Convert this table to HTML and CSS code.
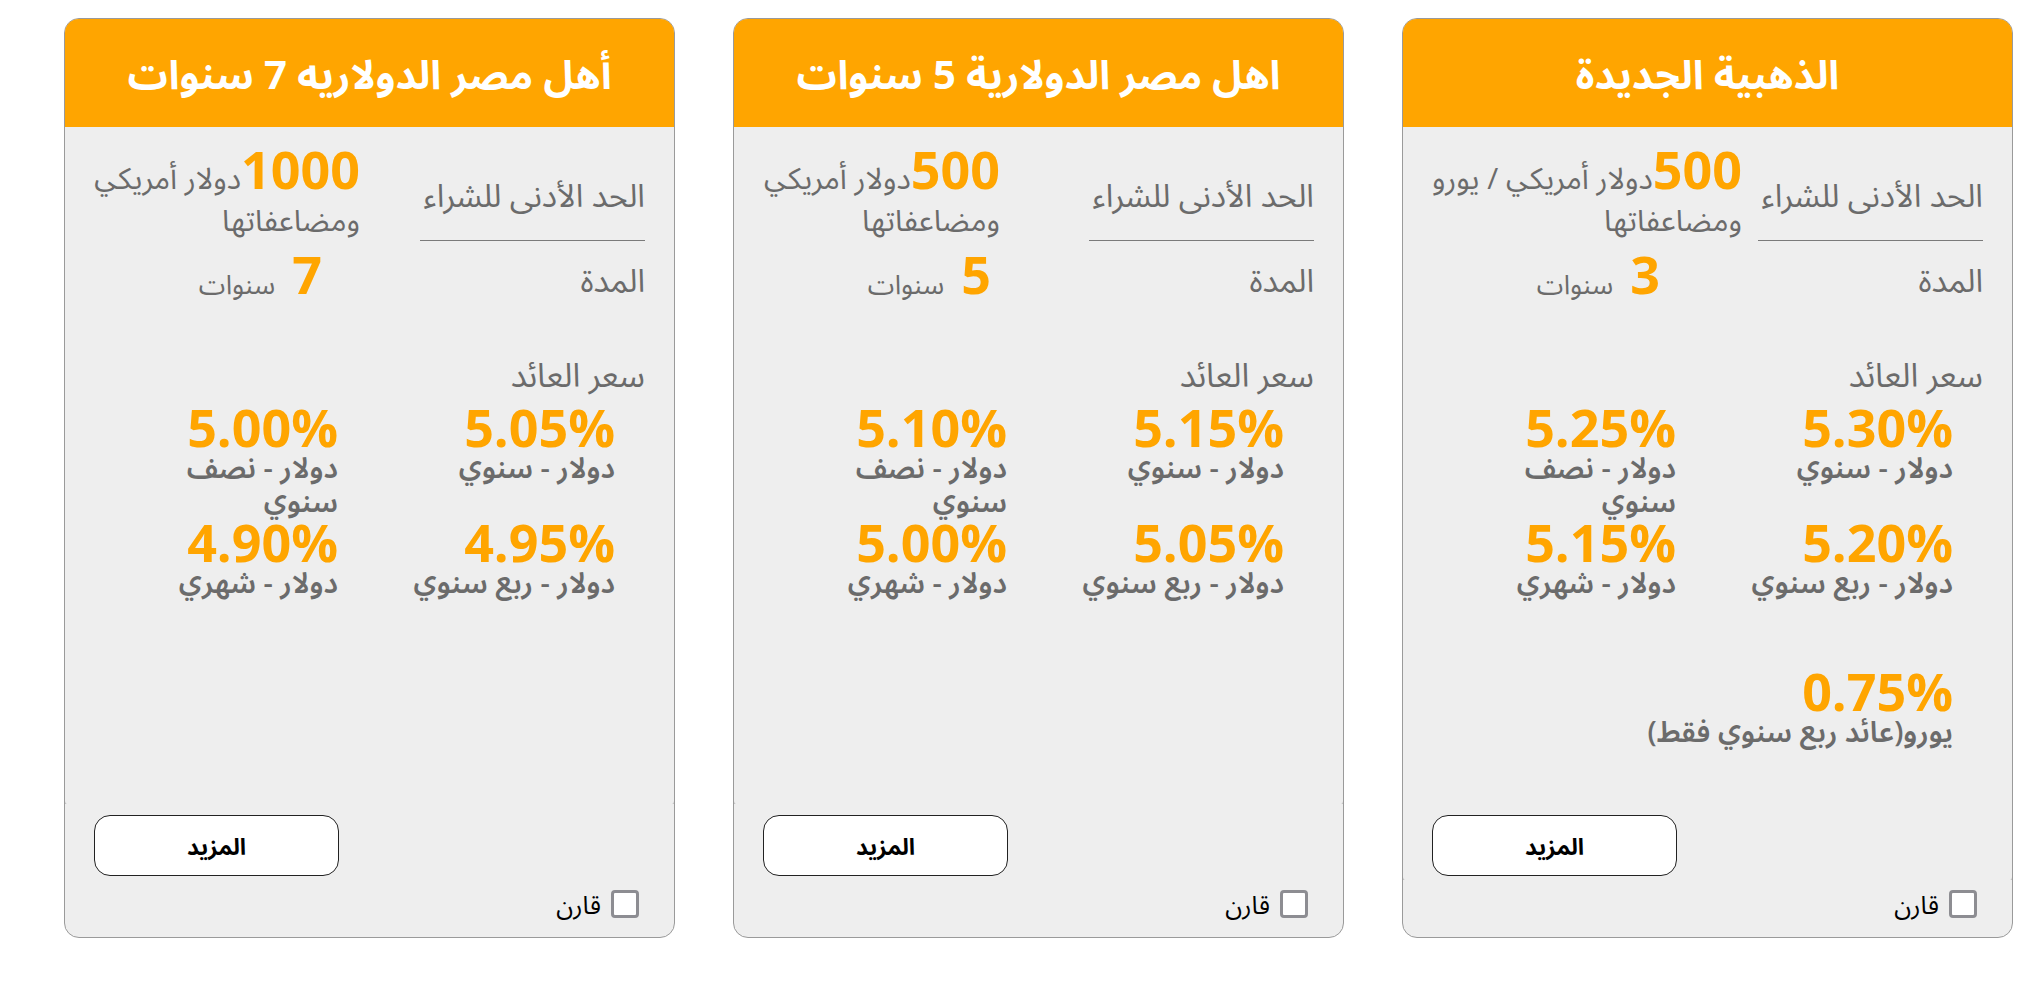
FILE: index.html
```html
<!DOCTYPE html>
<html lang="ar" dir="rtl">
<head>
<meta charset="utf-8">
<title>شهادات</title>
<link rel="stylesheet" href="styles.css">
</head>
<body>
<div class="page">
  <div class="card">
    <div class="card-head"><h2 class="card-title">الذهبية الجديدة</h2></div>
    <div class="card-body card-body--tall">
      <div class="spec">
        <div class="spec-label spec-label--line">الحد الأدنى للشراء</div>
        <div class="spec-value"><span class="big">500</span>دولار أمريكي / يورو ومضاعفاتها</div>
        <div class="spec-label">المدة</div>
        <div class="spec-value spec-value--term"><span class="big big--term">3</span> سنوات</div>
      </div>
      <div class="rates-title">سعر العائد</div>
      <div class="rates">
        <div class="rate"><div class="rate-num">5.30%</div><div class="rate-label">دولار - سنوي</div></div>
        <div class="rate"><div class="rate-num">5.25%</div><div class="rate-label">دولار - نصف سنوي</div></div>
        <div class="rate"><div class="rate-num">5.20%</div><div class="rate-label">دولار - ربع سنوي</div></div>
        <div class="rate"><div class="rate-num">5.15%</div><div class="rate-label">دولار - شهري</div></div>
      </div>
      <div class="rate rate--euro"><div class="rate-num">0.75%</div><div class="rate-label">يورو(عائد ربع سنوي فقط)</div></div>
    </div>
    <div class="card-foot">
      <button class="more-btn" type="button">المزيد</button>
      <label class="compare"><span class="compare-box"></span>قارن</label>
    </div>
  </div>

  <div class="card">
    <div class="card-head"><h2 class="card-title">اهل مصر الدولارية 5 سنوات</h2></div>
    <div class="card-body">
      <div class="spec">
        <div class="spec-label spec-label--line">الحد الأدنى للشراء</div>
        <div class="spec-value spec-value--mid"><span class="big">500</span>دولار أمريكي ومضاعفاتها</div>
        <div class="spec-label">المدة</div>
        <div class="spec-value spec-value--term"><span class="big big--term">5</span> سنوات</div>
      </div>
      <div class="rates-title">سعر العائد</div>
      <div class="rates">
        <div class="rate"><div class="rate-num">5.15%</div><div class="rate-label">دولار - سنوي</div></div>
        <div class="rate"><div class="rate-num">5.10%</div><div class="rate-label">دولار - نصف سنوي</div></div>
        <div class="rate"><div class="rate-num">5.05%</div><div class="rate-label">دولار - ربع سنوي</div></div>
        <div class="rate"><div class="rate-num">5.00%</div><div class="rate-label">دولار - شهري</div></div>
      </div>
    </div>
    <div class="card-foot">
      <button class="more-btn" type="button">المزيد</button>
      <label class="compare"><span class="compare-box"></span>قارن</label>
    </div>
  </div>

  <div class="card">
    <div class="card-head"><h2 class="card-title">أهل مصر الدولاريه 7 سنوات</h2></div>
    <div class="card-body">
      <div class="spec">
        <div class="spec-label spec-label--line">الحد الأدنى للشراء</div>
        <div class="spec-value spec-value--wide"><span class="big">1000</span>دولار أمريكي ومضاعفاتها</div>
        <div class="spec-label">المدة</div>
        <div class="spec-value spec-value--term"><span class="big big--term">7</span> سنوات</div>
      </div>
      <div class="rates-title">سعر العائد</div>
      <div class="rates">
        <div class="rate"><div class="rate-num">5.05%</div><div class="rate-label">دولار - سنوي</div></div>
        <div class="rate"><div class="rate-num">5.00%</div><div class="rate-label">دولار - نصف سنوي</div></div>
        <div class="rate"><div class="rate-num">4.95%</div><div class="rate-label">دولار - ربع سنوي</div></div>
        <div class="rate"><div class="rate-num">4.90%</div><div class="rate-label">دولار - شهري</div></div>
      </div>
    </div>
    <div class="card-foot">
      <button class="more-btn" type="button">المزيد</button>
      <label class="compare"><span class="compare-box"></span>قارن</label>
    </div>
  </div>
</div>
</body>
</html>
```

FILE: styles.css
```css
* { box-sizing: border-box; }

body {
  margin: 0;
  background: #ffffff;
  font-family: "Open Sans", "Noto Sans Arabic UI", "Noto Sans Arabic", "DejaVu Sans", sans-serif;
}

.page {
  display: flex;
  direction: rtl;
  gap: 58px;
  padding: 18px 27px 0 0;
}

.card {
  width: 611px;
  height: 920px;
  border: 1px solid #9a9a9a;
  border-radius: 15px;
  background: #eeeeee;
  display: grid;
  grid-template-rows: 108px 1fr;
}

.card-head {
  background: #ffa500;
  border-radius: 14px 14px 0 0;
  display: flex;
  align-items: center;
  justify-content: center;
}

.card-title {
  margin: 0;
  color: #ffffff;
  font-size: 40px;
  font-weight: 700;
}

.card-body {
  grid-row: 2;
  grid-column: 1;
  align-self: start;
  margin: 0 -1px;
  min-height: 677px;
  border-style: solid;
  border-color: #9a9a9a;
  border-width: 0 1px;
  border-radius: 0 0 3px 3px;
  padding: 21px 29px 132px 18px;
}

.spec {
  display: grid;
  grid-template-columns: 225px 1fr;
  column-gap: 16px;
}

.spec-label {
  grid-column: 1;
  font-size: 32px;
  white-space: nowrap;
  color: #6b6b6b;
  display: flex;
  align-items: center;
}

.spec-label--line {
  border-bottom: 1px solid #7a7a7a;
}

.spec-value {
  grid-column: 2;
  font-size: 30px;
  color: #6b6b6b;
  line-height: 42px;
}

.spec-value--mid { margin-right: 73px; }
.spec-value--wide { margin-right: 44px; }

.spec-value--term {
  margin-right: 82px;
  font-size: 27px;
  line-height: 66px;
}

.big {
  color: #ffa500;
  font-size: 52px;
  font-weight: 700;
  line-height: 42px;
}

.big--term {
  line-height: 66px;
  margin-inline-end: 10px;
}

.rates-title {
  margin-top: 38px;
  font-size: 33px;
  line-height: 40px;
  color: #6b6b6b;
}

.rates {
  display: grid;
  grid-template-columns: 277px 190px;
  margin: 8px 30px 0 0;
}

.rate-num {
  font-size: 52px;
  font-weight: 700;
  color: #ffa500;
  line-height: 47px;
}

.rate-label {
  font-size: 29px;
  font-weight: 600;
  color: #6b6b6b;
  line-height: 34px;
}

.rate--euro {
  margin: 68px 30px 0 0;
}

.card-foot {
  grid-row: 2;
  grid-column: 1;
  align-self: end;
  display: flex;
  flex-direction: column;
  padding: 0 35px 19px 29px;
}

.more-btn {
  align-self: flex-end;
  width: 245px;
  height: 61px;
  background: #ffffff;
  border: 1px solid #222222;
  border-radius: 16px;
  font-family: inherit;
  font-size: 23px;
  font-weight: 700;
  color: #000000;
}

.compare {
  align-self: flex-start;
  margin-top: 14px;
  display: flex;
  align-items: center;
  gap: 10px;
  font-size: 25px;
  line-height: 28px;
  color: #000000;
}

.compare-box {
  width: 28px;
  height: 28px;
  background: #ffffff;
  border: 3px solid #8d8d92;
  border-radius: 4px;
}
```
